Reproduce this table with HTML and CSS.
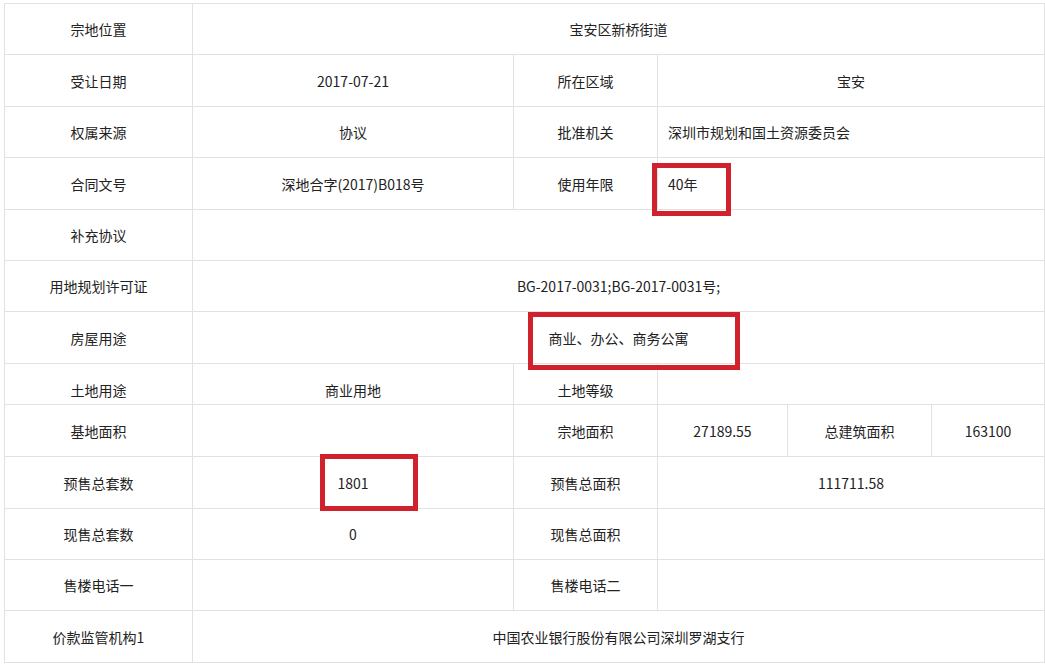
FILE: index.html
```html
<!DOCTYPE html>
<html lang="zh-CN">
<head>
<meta charset="utf-8">
<title>宗地信息</title>
<link rel="stylesheet" href="styles.css">
</head>
<body>
<div class="page">
  <table class="info">
    <colgroup>
      <col class="c1"><col class="c2"><col class="c3"><col class="c4"><col class="c5"><col class="c6">
    </colgroup>
    <tr class="h51"><td class="lbl">宗地位置</td><td colspan="5">宝安区新桥街道</td></tr>
    <tr class="h52"><td class="lbl">受让日期</td><td>2017-07-21</td><td>所在区域</td><td colspan="3">宝安</td></tr>
    <tr class="h51"><td class="lbl">权属来源</td><td>协议</td><td>批准机关</td><td colspan="3" class="left">深圳市规划和国土资源委员会</td></tr>
    <tr class="h52"><td class="lbl">合同文号</td><td>深地合字(2017)B018号</td><td>使用年限</td><td colspan="3" class="left">40年</td></tr>
    <tr class="h51"><td class="lbl">补充协议</td><td colspan="5"></td></tr>
    <tr class="h51"><td class="lbl">用地规划许可证</td><td colspan="5">BG-2017-0031;BG-2017-0031号;</td></tr>
    <tr class="h52"><td class="lbl">房屋用途</td><td colspan="5">商业、办公、商务公寓</td></tr>
    <tr class="cut"><td class="lbl">土地用途</td><td>商业用地</td><td>土地等级</td><td colspan="3"></td></tr>
    <tr class="h52"><td class="lbl">基地面积</td><td></td><td>宗地面积</td><td>27189.55</td><td>总建筑面积</td><td>163100</td></tr>
    <tr class="h52"><td class="lbl">预售总套数</td><td>1801</td><td>预售总面积</td><td colspan="3">111711.58</td></tr>
    <tr class="h51"><td class="lbl">现售总套数</td><td>0</td><td>现售总面积</td><td colspan="3"></td></tr>
    <tr class="h51"><td class="lbl">售楼电话一</td><td></td><td>售楼电话二</td><td colspan="3"></td></tr>
    <tr class="h52"><td class="lbl">价款监管机构1</td><td colspan="5">中国农业银行股份有限公司深圳罗湖支行</td></tr>
  </table>
  <div class="mark mark-years"></div>
  <div class="mark mark-use"></div>
  <div class="mark mark-units"></div>
</div>
</body>
</html>
```
FILE: styles.css
```css
html, body {
  margin: 0;
  padding: 0;
  background: #ffffff;
}
.page {
  position: relative;
  width: 1045px;
  height: 666px;
  overflow: hidden;
  padding: 3px 0 0 4px;
  box-sizing: border-box;
}
.info {
  border-collapse: collapse;
  table-layout: fixed;
  width: 1040px;
  font-family: "Noto Sans CJK SC", "Microsoft YaHei", sans-serif;
  font-size: 14px;
  line-height: 20px;
  color: #222;
}
.c1 { width: 188px; }
.c2 { width: 321px; }
.c3 { width: 144px; }
.c4 { width: 130px; }
.c5 { width: 144px; }
.c6 { width: 113px; }
.info td {
  border: 1px solid #e2e2e2;
  padding: 0 10px;
  text-align: center;
  vertical-align: middle;
  white-space: nowrap;
}
.info td.left {
  text-align: left;
}
.h51 td { height: 50px; }
.h52 td { height: 51px; }
.cut td {
  height: 41px;
  vertical-align: top;
  padding-top: 16px;
  box-sizing: border-box;
}
.mark {
  position: absolute;
  border: 5px solid #d0222c;
  box-sizing: border-box;
}
.mark-years { left: 652px; top: 163px; width: 79px; height: 53px; }
.mark-use { left: 528px; top: 312px; width: 212px; height: 58px; }
.mark-units { left: 320px; top: 454px; width: 98px; height: 57px; }
```
